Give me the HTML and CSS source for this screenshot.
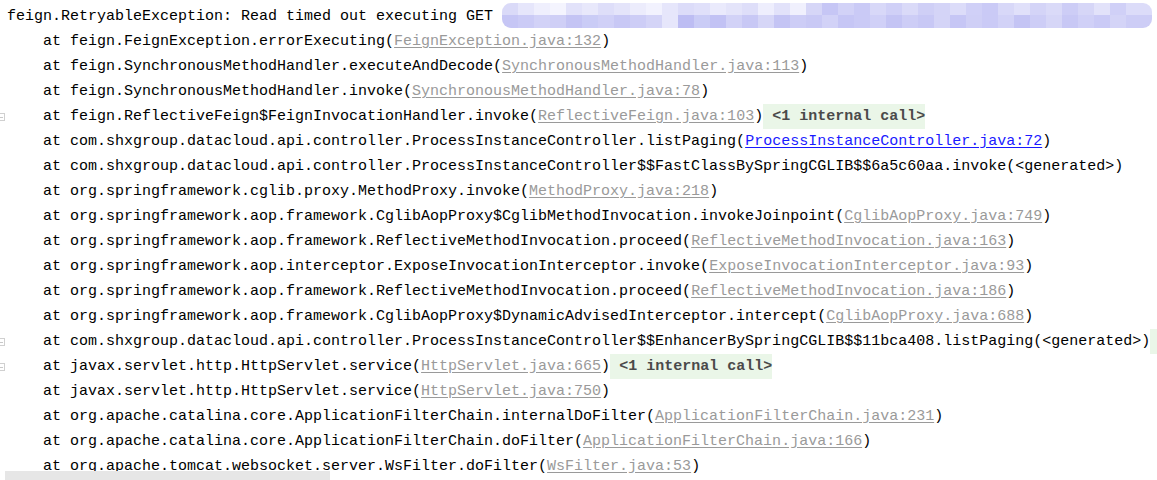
FILE: index.html
```html
<!DOCTYPE html>
<html>
<head>
<meta charset="utf-8">
<link rel="stylesheet" href="styles.css">
</head>
<body>
<div class="console">
  <div class="line"><span class="gutter"></span><span class="code">feign.RetryableException: Read timed out executing GET <span class="blur"></span></span></div>
  <div class="line"><span class="gutter"></span><span class="code">    at feign.FeignException.errorExecuting(<span class="lib">FeignException.java:132</span>)</span></div>
  <div class="line"><span class="gutter"></span><span class="code">    at feign.SynchronousMethodHandler.executeAndDecode(<span class="lib">SynchronousMethodHandler.java:113</span>)</span></div>
  <div class="line"><span class="gutter"></span><span class="code">    at feign.SynchronousMethodHandler.invoke(<span class="lib">SynchronousMethodHandler.java:78</span>)</span></div>
  <div class="line"><span class="gutter"><span class="fold"></span></span><span class="code">    at feign.ReflectiveFeign$FeignInvocationHandler.invoke(<span class="lib">ReflectiveFeign.java:103</span>)<span class="internal"> &lt;1 internal call&gt;</span></span></div>
  <div class="line"><span class="gutter"></span><span class="code">    at com.shxgroup.datacloud.api.controller.ProcessInstanceController.listPaging(<span class="user">ProcessInstanceController.java:72</span>)</span></div>
  <div class="line"><span class="gutter"></span><span class="code">    at com.shxgroup.datacloud.api.controller.ProcessInstanceController$$FastClassBySpringCGLIB$$6a5c60aa.invoke(&lt;generated&gt;)</span></div>
  <div class="line"><span class="gutter"></span><span class="code">    at org.springframework.cglib.proxy.MethodProxy.invoke(<span class="lib">MethodProxy.java:218</span>)</span></div>
  <div class="line"><span class="gutter"></span><span class="code">    at org.springframework.aop.framework.CglibAopProxy$CglibMethodInvocation.invokeJoinpoint(<span class="lib">CglibAopProxy.java:749</span>)</span></div>
  <div class="line"><span class="gutter"></span><span class="code">    at org.springframework.aop.framework.ReflectiveMethodInvocation.proceed(<span class="lib">ReflectiveMethodInvocation.java:163</span>)</span></div>
  <div class="line"><span class="gutter"></span><span class="code">    at org.springframework.aop.interceptor.ExposeInvocationInterceptor.invoke(<span class="lib">ExposeInvocationInterceptor.java:93</span>)</span></div>
  <div class="line"><span class="gutter"></span><span class="code">    at org.springframework.aop.framework.ReflectiveMethodInvocation.proceed(<span class="lib">ReflectiveMethodInvocation.java:186</span>)</span></div>
  <div class="line"><span class="gutter"></span><span class="code">    at org.springframework.aop.framework.CglibAopProxy$DynamicAdvisedInterceptor.intercept(<span class="lib">CglibAopProxy.java:688</span>)</span></div>
  <div class="line"><span class="gutter"><span class="fold"></span></span><span class="code">    at com.shxgroup.datacloud.api.controller.ProcessInstanceController$$EnhancerBySpringCGLIB$$11bca408.listPaging(&lt;generated&gt;)<span class="internal"> &lt;1 internal call&gt;</span></span></div>
  <div class="line"><span class="gutter"><span class="fold"></span></span><span class="code">    at javax.servlet.http.HttpServlet.service(<span class="lib">HttpServlet.java:665</span>)<span class="internal"> &lt;1 internal call&gt;</span></span></div>
  <div class="line"><span class="gutter"></span><span class="code">    at javax.servlet.http.HttpServlet.service(<span class="lib">HttpServlet.java:750</span>)</span></div>
  <div class="line"><span class="gutter"></span><span class="code">    at org.apache.catalina.core.ApplicationFilterChain.internalDoFilter(<span class="lib">ApplicationFilterChain.java:231</span>)</span></div>
  <div class="line"><span class="gutter"></span><span class="code">    at org.apache.catalina.core.ApplicationFilterChain.doFilter(<span class="lib">ApplicationFilterChain.java:166</span>)</span></div>
  <div class="line"><span class="gutter"></span><span class="code">    at org.apache.tomcat.websocket.server.WsFilter.doFilter(<span class="lib">WsFilter.java:53</span>)</span></div>
</div>
<div class="hscroll"><div class="thumb"></div></div>
</body>
</html>
```

FILE: styles.css
```css
html, body {
  margin: 0;
  padding: 0;
  background: #ffffff;
  overflow: hidden;
}
body {
  width: 1157px;
  height: 480px;
  position: relative;
}
.console {
  padding-top: 4px;
  width: 1157px;
  height: 480px;
  box-sizing: border-box;
  overflow: hidden;
  font-family: "Liberation Mono", "DejaVu Sans Mono", monospace;
  font-size: 15px;
  line-height: 25px;
  color: #000000;
}
.line {
  display: flex;
  align-items: center;
  height: 25px;
}
.gutter {
  width: 7px;
  flex: 0 0 7px;
  height: 25px;
  display: flex;
  align-items: center;
}
.fold {
  display: block;
  width: 5px;
  height: 8px;
  border: 1px solid #d0d0d0;
  border-left: none;
  box-sizing: border-box;
  position: relative;
}
.fold::after {
  content: "";
  position: absolute;
  left: 0;
  top: 3px;
  width: 3px;
  height: 1px;
  background: #c8c8c8;
}
.code {
  display: block;
  white-space: pre;
}
.lib {
  color: #9a9a9a;
  text-decoration: underline;
  text-underline-offset: 2px;
}
.user {
  color: #1a1aff;
  text-decoration: underline;
  text-underline-offset: 2px;
}
.internal {
  display: inline-block;
  background: #eaf6e8;
  color: #4a4a4a;
  font-weight: bold;
  line-height: 25px;
}
.blur {
  display: inline-block;
  vertical-align: top;
  width: 650px;
  height: 25px;
  margin-top: -1px;
  border-radius: 9px;
  background:
    linear-gradient(90deg,
      #dadaf8 0 16px, #e6e6fb 16px 32px, #efeffd 32px 48px, #f4f4fe 48px 64px,
      #e2e2fa 64px 80px, #e8e8fb 80px 96px, #dedef9 96px 112px, #e4e4fa 112px 128px,
      #ececfc 128px 144px, #f2f2fe 144px 160px, #e6e6fb 160px 176px, #dcdcf9 176px 192px,
      #e0e0fa 192px 208px, #eaeafc 208px 224px, #e4e4fa 224px 240px, #dedef9 240px 256px,
      #eeeefd 256px 272px, #e2e2fa 272px 288px, #f0f0fd 288px 304px, #d6d6f7 304px 320px,
      #c6c6f5 320px 336px, #d2d2f7 336px 352px, #cacaf6 352px 368px, #d8d8f8 368px 384px,
      #d0d0f7 384px 400px, #dadaf8 400px 416px, #cfcff6 416px 432px, #d4d4f7 432px 448px,
      #dcdcf9 448px 464px, #d0d0f7 464px 480px, #cacaf6 480px 496px, #d8d8f8 496px 512px,
      #e0e0fa 512px 528px, #d4d4f7 528px 544px, #dadaf8 544px 560px, #cdcdf6 560px 576px,
      #d6d6f7 576px 592px, #e2e2fa 592px 608px, #d0d0f7 608px 624px, #dcdcf9 624px 650px)
      top left / 100% 12px no-repeat,
    linear-gradient(90deg,
      #c6c6f5 0 16px, #cbcbf6 16px 32px, #d2d2f7 32px 48px, #cfcff6 48px 64px,
      #c4c4f4 64px 80px, #caccf6 80px 96px, #d0d0f7 96px 112px, #c8c8f5 112px 128px,
      #cdcdf6 128px 144px, #d4d4f7 144px 160px, #e6e6fb 160px 176px, #bdbdf3 176px 192px,
      #caccf6 192px 208px, #c2c2f4 208px 224px, #d2d2f7 224px 240px, #c8c8f5 240px 256px,
      #d6d6f7 256px 272px, #c4c4f4 272px 288px, #cdcdf6 288px 304px, #c9c9f5 304px 320px,
      #d2d2f7 320px 336px, #c6c6f5 336px 352px, #cacaf6 352px 368px, #d0d0f7 368px 384px,
      #c4c4f4 384px 400px, #cdcdf6 400px 416px, #c8c8f5 416px 432px, #d4d4f7 432px 448px,
      #c6c6f5 448px 464px, #cfcff6 464px 480px, #cacaf6 480px 496px, #d2d2f7 496px 512px,
      #c4c4f4 512px 528px, #cdcdf6 528px 544px, #d6d6f7 544px 560px, #c8c8f5 560px 576px,
      #d0d0f7 576px 592px, #cacaf6 592px 608px, #d4d4f7 608px 624px, #cdcdf6 624px 650px)
      bottom left / 100% 13px no-repeat;
}
.hscroll {
  position: absolute;
  left: 0;
  bottom: 0;
  width: 100%;
  height: 9px;
}
.thumb {
  margin-left: 5px;
  width: 325px;
  height: 9px;
  background: #e6e6e6;
}
```
